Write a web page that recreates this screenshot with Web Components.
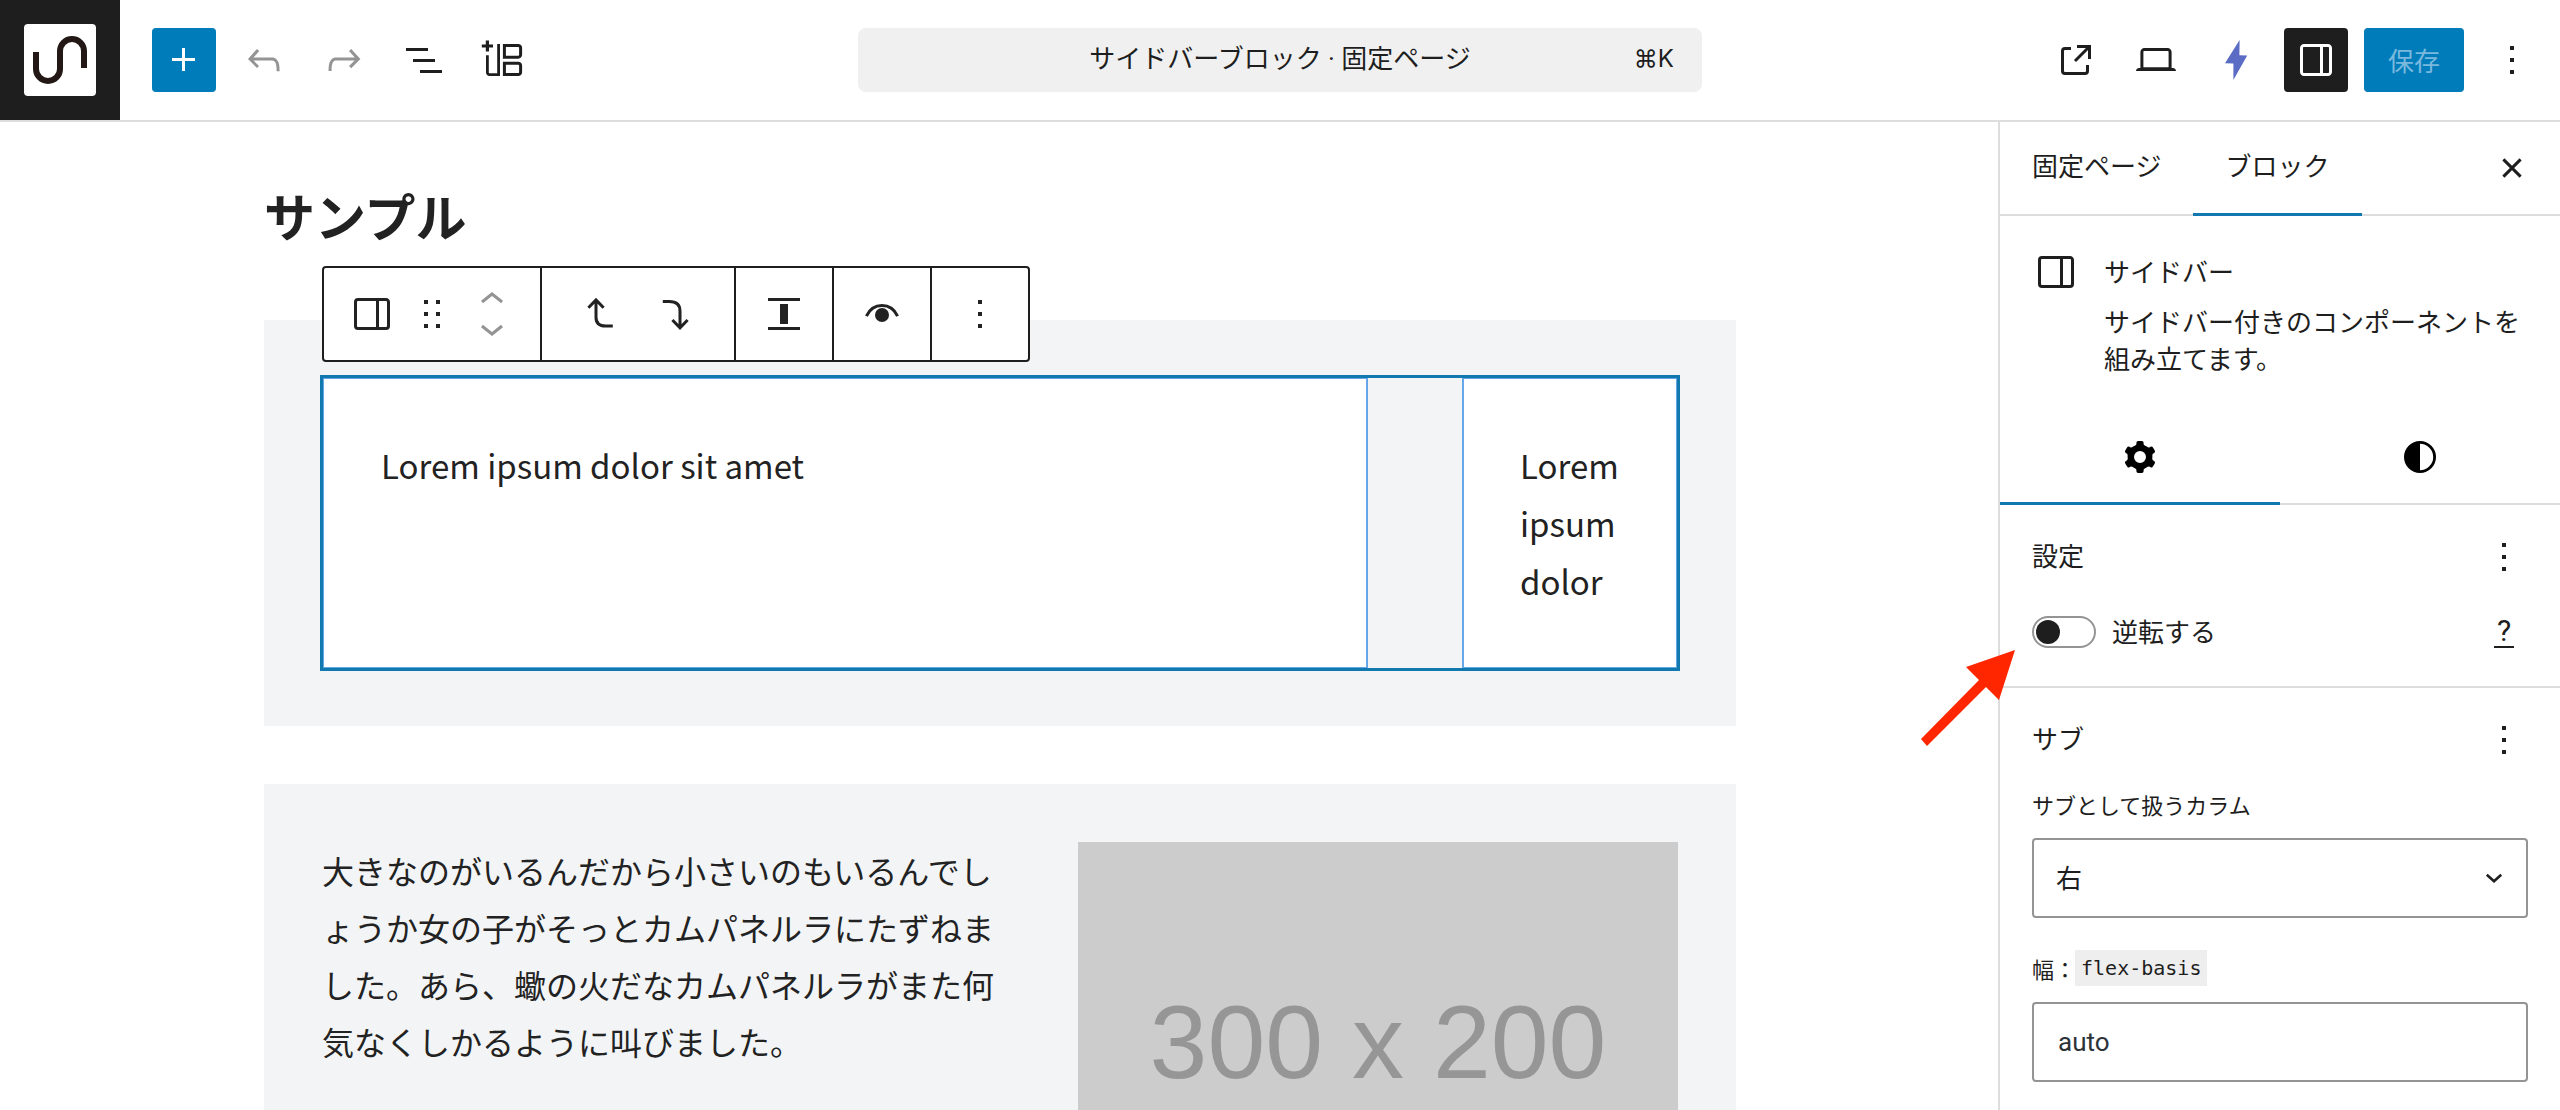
<!DOCTYPE html>
<html lang="ja">
<head>
<meta charset="utf-8">
<title>サイドバーブロック · 固定ページ</title>
<style>
html, body { margin: 0; height: 100%; }
body {
  font-family: "Noto Sans CJK JP", sans-serif;
  font-size: 26px; line-height: 36px; color: #1e1e1e; background: #fff; overflow: hidden;
  --accent: #007cba; --accent-line: #1279b0; --line: #ddd; --ink: #1e1e1e;
}
</style>
</head>
<body>
<editor-shell></editor-shell>
<script>
const BASE = `<style>
*{box-sizing:border-box}
:host([hidden]){display:none}
button{font:inherit;color:inherit;background:none;border:0;padding:0;margin:0;cursor:pointer}
p,h1,h2{margin:0;font-weight:400}
h2{font-size:26px}
</style>`;

function define(name, render) {
  customElements.define(name, class extends HTMLElement {
    connectedCallback() {
      if (this.shadowRoot) return;
      this.attachShadow({ mode: 'open' }).innerHTML = BASE + render(this);
    }
  });
}

const L = (d, w = 1.5) => `<path d="${d}" fill="none" stroke="currentColor" stroke-width="${w}"/>`;
const F = d => `<path d="${d}"/>`;
const ICONS = {
  plus: F('M11 12.5V17.5H12.5V12.5H17.5V11H12.5V6H11V11H6V12.5H11Z'),
  undo: F('M18.3 11.7c-.6-.6-1.4-.9-2.3-.9H6.7l2.9-3.3-1.1-1-4.5 5L8.5 16l1-1-2.7-2.7H16c.5 0 .9.2 1.3.5 1 1 1 3.4 1 4.5v.3h1.5v-.2c0-1.5 0-4.3-1.5-5.7z'),
  redo: F('M15.6 6.5l-1.1 1 2.9 3.3H8c-.9 0-1.7.3-2.3.9-1.4 1.5-1.4 4.2-1.4 5.6v.2h1.5v-.3c0-1.1 0-3.5 1-4.5.3-.3.7-.5 1.3-.5h9.2L14.5 15l1.1 1.1 4.6-4.6-4.6-5z'),
  list: F('M3 6h11v1.5H3V6Zm3.5 5.5h11V13h-11v-1.5ZM21 17H10v1.5h11V17Z'),
  library: L('M3.7 2.2V7.8M.9 5H6.5', 1.6) + L('M3.7 9.6V18.3a1 1 0 0 0 1 1H9.3V4', 1.4) + L('M12.2 4.7H19.1a1.2 1.2 0 0 1 1.2 1.2V9.4a1.2 1.2 0 0 1-1.2 1.2H12.2ZM12.2 13.6H19.1a1.2 1.2 0 0 1 1.2 1.2V18.1a1.2 1.2 0 0 1-1.2 1.2H12.2Z', 1.5),
  external: F('M19.5 4.5h-7V6h4.44l-5.97 5.97 1.06 1.06L18 7.06v4.44h1.5v-7Zm-13 1a2 2 0 0 0-2 2v10a2 2 0 0 0 2 2h10a2 2 0 0 0 2-2v-3H17v3a.5.5 0 0 1-.5.5h-10a.5.5 0 0 1-.5-.5v-10a.5.5 0 0 1 .5-.5h3V5.5h-3Z'),
  desktop: F('M20.5 16h-.7V8c0-1.1-.9-2-2-2H6.2c-1.1 0-2 .9-2 2v8h-.7c-.8 0-1.5.7-1.5 1.5h20c0-.8-.7-1.5-1.5-1.5zM5.7 8c0-.3.2-.5.5-.5h11.6c.3 0 .5.2.5.5v7.6H5.7V8z'),
  bolt: '<path fill="#5b6cc4" d="M13.8 2L13.7 9.6L17.6 9.7L10.7 22V13.8L6.5 13.6Z"/>',
  drawer: F('M18 4H6c-1.1 0-2 .9-2 2v12c0 1.1.9 2 2 2h12c1.1 0 2-.9 2-2V6c0-1.1-.9-2-2-2zm-4 14.5H6c-.3 0-.5-.2-.5-.5V6c0-.3.2-.5.5-.5h8v13zm4.5-.5c0 .3-.2.5-.5.5h-2.5v-13H18c.3 0 .5.2.5.5v12z'),
  more: F('M13 19h-2v-2h2v2zm0-6h-2v-2h2v2zm0-6h-2V5h2v2z'),
  block: L('M5 4.75H19a1.25 1.25 0 0 1 1.25 1.25V18a1.25 1.25 0 0 1-1.25 1.25H5A1.25 1.25 0 0 1 3.75 18V6A1.25 1.25 0 0 1 5 4.75ZM14.75 4.75V19.25'),
  drag: F('M8 7h2V5H8v2zm0 6h2v-2H8v2zm0 6h2v-2H8v2zm6-14v2h2V5h-2zm0 8h2v-2h-2v2zm0 6h2v-2h-2v2z'),
  up: F('M6.5 12.4L12 8l5.5 4.4-.9 1.2L12 10l-4.5 3.6-1-1.2z'),
  down: F('M17.5 11.6L12 16l-5.5-4.4.9-1.2L12 14l4.5-3.6 1 1.2z'),
  before: L('M6.2 8.9L10 5L13.8 8.9M10 5V13.6Q10 18 14.8 18H18.4'),
  after: L('M5.4 5.8H8.6Q14 5.8 14 10.6V18.9M10.2 15L14 18.9L17.8 15'),
  middle: F('M4 4H20V5.5H4ZM4 18.5H20V20H4ZM10 7H14V17H10Z'),
  eye: L('M4.2 13.1C5.8 9.7 8.8 7.8 12 7.8S18.2 9.7 19.8 13.1', 1.5) + '<circle cx="12" cy="12.5" r="3.5"/>',
  gear: '<circle cx="12" cy="12" r="4.6" fill="none" stroke="currentColor" stroke-width="3.2"/><g>' +
    [0, 60, 120, 180, 240, 300].map(a => `<path transform="rotate(${a} 12 12)" d="M9.2 7.2L10.2 5.6V4.9Q10.2 4 11.1 4H12.9Q13.8 4 13.8 4.9V5.6L14.8 7.2Z"/>`).join('') + '</g>',
  contrast: '<circle cx="12" cy="12" r="7.3" fill="none" stroke="currentColor" stroke-width="1.4"/><path d="M12 4.5V19.5A7.5 7.5 0 0 1 12 4.5Z"/>',
  close: L('M7.7 7.7L16.3 16.3M16.3 7.7L7.7 16.3', 1.5),
  caret: L('M8.4 10.4L12 13.6L15.6 10.4', 1.3)
};

define('ui-icon', el => `
<style>:host{display:block;width:48px;height:48px;flex:none}svg{display:block;width:100%;height:100%;overflow:visible}</style>
<svg viewBox="0 0 24 24" fill="currentColor" aria-hidden="true">${ICONS[el.getAttribute('name')]}</svg>`);

define('icon-button', el => `
<style>
:host{display:block;flex:none}
button{display:flex;align-items:center;justify-content:center;width:64px;height:64px;border-radius:4px}
:host([tone=primary]) button{background:var(--accent);color:#fff}
:host([tone=dark]) button{background:var(--ink);color:#fff}
:host([tone=muted]) button{color:#949494}
</style>
<button aria-label="${el.getAttribute('label') || ''}"><ui-icon name="${el.getAttribute('name')}"></ui-icon></button>`);

define('editor-header', () => `
<style>
:host{display:grid;grid-template-columns:1fr minmax(0,844px) 1fr;align-items:center;height:122px;border-bottom:2px solid var(--line);background:#fff}
.side{display:flex;align-items:center;gap:16px}
.end{justify-content:flex-end;padding-right:16px}
.logo{width:120px;height:120px;background:var(--ink);display:flex;align-items:center;justify-content:center;margin-right:16px}
.logo svg{width:72px;height:72px;background:#fff;border-radius:4px}
.search{display:grid;grid-template-columns:1fr auto 1fr;align-items:center;height:64px;border-radius:8px;background:#f0f0f0;padding:0 28px 2px}
.search .name{grid-column:2;font-family:Roboto,"Noto Sans CJK JP",sans-serif}
kbd{font:24px/36px Inter,"Noto Sans CJK JP",sans-serif;text-align:right}
.save{width:100px;height:64px;border-radius:4px;background:var(--accent);color:#7ab8de}
</style>
<div class="side">
  <a class="logo" href="#" aria-label="ホーム"><svg viewBox="0 0 72 72"><path d="M12 28V45a12 12 0 0 0 24 0V27a12 12 0 0 1 24 0V44" fill="none" stroke="#231815" stroke-width="6"/></svg></a>
  <icon-button name="plus" tone="primary" label="追加"></icon-button>
  <icon-button name="undo" tone="muted" label="元に戻す"></icon-button>
  <icon-button name="redo" tone="muted" label="やり直す"></icon-button>
  <icon-button name="list" label="リスト表示"></icon-button>
  <icon-button name="library" label="ライブラリ"></icon-button>
</div>
<button class="search"><span class="name">サイドバーブロック · 固定ページ</span><kbd>⌘K</kbd></button>
<div class="side end">
  <icon-button name="external" label="表示"></icon-button>
  <icon-button name="desktop" label="プレビュー"></icon-button>
  <icon-button name="bolt" label="ツール"></icon-button>
  <icon-button name="drawer" tone="dark" label="設定"></icon-button>
  <button class="save">保存</button>
  <icon-button name="more" label="オプション"></icon-button>
</div>`);

define('block-toolbar', () => `
<style>
:host{display:flex;height:96px;border:2px solid var(--ink);border-radius:4px;background:#fff}
.group{display:flex;align-items:center;justify-content:center;width:98px;border-right:2px solid var(--ink)}
.group:last-child{width:96px;border-right:0}
.first{width:218px}.pair{width:194px}
button,.movers{display:flex;align-items:center;justify-content:center;width:60px;height:92px}
.pair button{width:76px}
.movers{flex-direction:column;color:#949494}
.movers button{height:28px}
</style>
<div class="group first">
  <button aria-label="サイドバー"><ui-icon name="block"></ui-icon></button>
  <button aria-label="ドラッグ"><ui-icon name="drag"></ui-icon></button>
  <div class="movers"><button aria-label="上に移動"><ui-icon name="up"></ui-icon></button><button aria-label="下に移動"><ui-icon name="down"></ui-icon></button></div>
</div>
<div class="group pair"><button aria-label="前に追加"><ui-icon name="before"></ui-icon></button><button aria-label="後に追加"><ui-icon name="after"></ui-icon></button></div>
<div class="group"><button aria-label="配置"><ui-icon name="middle"></ui-icon></button></div>
<div class="group"><button aria-label="表示"><ui-icon name="eye"></ui-icon></button></div>
<div class="group"><button aria-label="オプション"><ui-icon name="more"></ui-icon></button></div>`);

define('content-section', () => `
<style>
:host{display:block;position:relative;background:#f2f4f6;padding:58px}
::slotted([slot=toolbar]){position:absolute;left:58px;top:-54px}
</style><slot></slot><slot name="toolbar"></slot>`);

define('sidebar-block', () => `
<style>
:host{display:flex;gap:94px;margin:0 1px;outline:3px solid var(--accent-line);font-size:33px}
.col{background:#fff;padding:58px}
.main{flex:1;box-shadow:inset 0 0 0 1px #62a6e4,inset -2px 0 0 #6aa7ec}
.sub{flex:0 0 215px;box-shadow:inset 0 0 0 1px #62a6e4,inset 2px 0 0 #6aa7ec}
</style>
<div class="col main"><slot name="main"></slot></div>
<div class="col sub"><slot name="sub"></slot></div>`);

define('media-row', () => `
<style>
:host{display:flex;gap:58px;align-items:flex-start;line-height:57px}
.text{flex:1;min-width:0}
.image{flex:none;width:600px;height:400px;background:#ccc;color:#969696;display:flex;align-items:center;justify-content:center;font:104px/120px "Liberation Sans",sans-serif}
</style>
<div class="text"><slot></slot></div>
<div class="image" role="img"><slot name="image"></slot></div>`);

define('editor-canvas', () => `
<style>
:host{display:block;flex:1;min-width:0;overflow:hidden;font-size:32px;line-height:58px;color:#222}
article{max-width:1472px;margin:0 auto;padding-top:48px}
h1{font-size:51px;line-height:90px;font-weight:700;margin-bottom:60px}
p{line-break:normal}
content-section{margin-bottom:58px}
</style>
<article>
  <h1>サンプル</h1>
  <content-section>
    <sidebar-block><p slot="main">Lorem ipsum dolor sit amet</p><p slot="sub">Lorem ipsum dolor</p></sidebar-block>
    <block-toolbar slot="toolbar"></block-toolbar>
  </content-section>
  <content-section>
    <media-row><p>大きなのがいるんだから小さいのもいるんでしょうか女の子がそっとカムパネルラにたずねました。あら、蠍の火だなカムパネルラがまた何気なくしかるように叫びました。</p><span slot="image">300 x 200</span></media-row>
  </content-section>
</article>`);

define('panel-section', el => `
<style>
:host{display:block;padding:0 32px;border-bottom:2px solid var(--line)}
:host(:last-of-type){border-bottom:0}
header{display:flex;align-items:center;justify-content:space-between;height:98px;padding-top:6px}
header button{display:flex;width:48px;justify-content:center}
h2{padding-bottom:4px}
</style>
<header><h2>${el.getAttribute('heading')}</h2><button aria-label="オプション"><ui-icon name="more"></ui-icon></button></header>
<slot></slot>`);

define('toggle-row', () => `
<style>
:host{display:flex;position:relative;align-items:center;height:58px;margin-bottom:25px}
input{appearance:none;margin:0 16px 0 0;width:64px;height:32px;border:2px solid #949494;border-radius:16px;background:#fff;display:flex;align-items:center;padding:2px}
input::before{content:"";width:24px;height:24px;border-radius:50%;background:var(--ink)}
input:checked{justify-content:flex-end}
label{padding-bottom:2px}
.help{margin-left:auto;margin-right:14px;width:20px;height:32px;font:30px/30px Roboto,sans-serif;border-bottom:2px solid var(--ink)}
.arrow{position:absolute;left:-112px;top:47px;width:96px;height:98px;pointer-events:none}
</style>
<input type="checkbox" role="switch" id="toggle"><label for="toggle"><slot></slot></label>
<button class="help" aria-label="ヘルプ">?</button>
<svg class="arrow" viewBox="0 0 96 98" aria-hidden="true"><path fill="#ff2600" d="M95 0L79 50L66 37L7 96L1 89L59 30L46 17Z"/></svg>`);

const FIELD = `
:host{display:flex;flex-direction:column}
label{display:flex;align-items:center;height:36px;margin-bottom:16px;font-size:22px;line-height:36px}
code{font:20px/36px "DejaVu Sans Mono",monospace;background:#eee;padding:0 6px;margin-left:-1px}
select,input{grid-area:1/1;appearance:none;width:100%;height:80px;margin:0;border:2px solid #949494;border-radius:4px;background:#fff;color:var(--ink)}
`;
define('select-field', el => `
<style>${FIELD}
:host{margin-bottom:32px}
.box{display:grid;align-items:center}
select{font:inherit;padding:0 22px 2px}
ui-icon{grid-area:1/1;justify-self:end;margin-right:10px;pointer-events:none}
</style>
<label for="field">${el.getAttribute('label')}</label>
<div class="box"><select id="field"><option>右</option><option>左</option></select><ui-icon name="caret"></ui-icon></div>`);

define('text-field', el => `
<style>${FIELD}
input{font:26px/36px Roboto,sans-serif;padding:0 24px;color:#2c3338}
</style>
<label for="field">${el.getAttribute('label')}<code>${el.getAttribute('code')}</code></label>
<input id="field" type="text" value="${el.getAttribute('value')}">`);

define('settings-sidebar', () => `
<style>
:host{display:block;flex:none;width:560px;background:#fff;box-shadow:-2px 0 0 var(--line);position:relative}
.tabs{display:flex;height:94px;box-shadow:inset 0 -2px 0 var(--line)}
.tabs button{padding:0 32px 8px}
.tabs .on,.views .on{box-shadow:inset 0 -3px 0 var(--accent-line)}
.tabs icon-button{margin:14px 16px 0 auto}
.card{display:flex;gap:24px;padding:32px 32px 0;height:193px}
.card h2{line-height:46px;margin-bottom:8px}
.card p{line-height:37px}
.views{display:flex;height:96px;box-shadow:inset 0 -2px 0 var(--line);color:#000}
.views button{flex:1;display:flex;align-items:center;justify-content:center}
</style>
<div class="tabs"><button>固定ページ</button><button class="on">ブロック</button><icon-button name="close" label="閉じる"></icon-button></div>
<div class="card"><ui-icon name="block"></ui-icon><div><h2>サイドバー</h2><p>サイドバー付きのコンポーネントを組み立てます。</p></div></div>
<div class="views"><button class="on" aria-label="設定"><ui-icon name="gear"></ui-icon></button><button aria-label="スタイル"><ui-icon name="contrast"></ui-icon></button></div>
<panel-section heading="設定"><toggle-row>逆転する</toggle-row></panel-section>
<panel-section heading="サブ"><select-field label="サブとして扱うカラム"></select-field><text-field label="幅：" code="flex-basis" value="auto"></text-field></panel-section>`);

define('editor-shell', () => `
<style>
:host{display:flex;flex-direction:column;height:100vh;overflow:hidden}
main{flex:1;display:flex;min-height:0}
</style>
<editor-header></editor-header>
<main><editor-canvas></editor-canvas><settings-sidebar></settings-sidebar></main>`);
</script>
</body>
</html>
